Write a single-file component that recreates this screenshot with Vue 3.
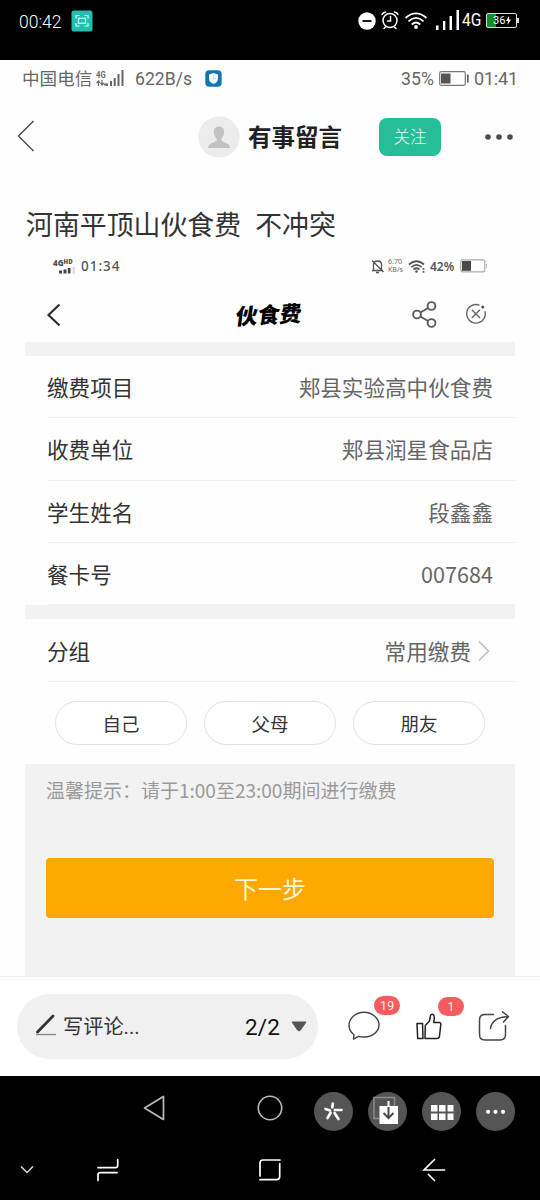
<script setup>
const rows = [
  { label: '缴费项目', value: '郏县实验高中伙食费' },
  { label: '收费单位', value: '郏县润星食品店' },
  { label: '学生姓名', value: '段鑫鑫' },
  { label: '餐卡号', value: '007684' }
]
const groups = ['自己', '父母', '朋友']
</script>

<template>
  <div class="screen">
    <div class="sys">
      <span class="sys-time">00:42</span>
      <svg class="shot" width="22" height="22" viewBox="0 0 22 22" fill="none">
        <rect x=".5" y=".5" width="21" height="21" rx="2.5" fill="#23bfae" />
        <g stroke="#d5fffa" stroke-width="1.2"><path d="M5 8.500V5.500H8.500M13.500 5.500H17V8.500M17 13V16H13.500M8.500 16H5V13" /><rect x="7.500" y="8.300" width="7" height="5" /></g>
      </svg>
      <svg class="dnd" width="18" height="18" viewBox="0 0 18 18"><circle cx="9" cy="9" r="8.700" fill="#fff" /><path d="M4.500 9H13.500" stroke="#000" stroke-width="1.800" /></svg>
      <svg class="alarm" width="18" height="20" viewBox="0 0 18 20" fill="none" stroke="#fff" stroke-width="1.500" stroke-linecap="round"><circle cx="9" cy="10.500" r="7" /><path d="M9.500 6.500V11H6.500M1 4.500Q2 2.500 4.500 2M13.500 2Q16 2.500 17 4.500M4.500 17L3 18.500M13.500 17L15 18.500" /></svg>
      <svg class="wifi" width="24" height="18" viewBox="0 0 24 18" fill="none" stroke="#fff" stroke-width="1.800"><path d="M1.500 6Q12-3.200 22.500 6M4.500 9.300Q12 2.500 19.500 9.300M7.800 12.500Q12 8.500 16.200 12.500" /><circle cx="12" cy="15" r="1.900" fill="#fff" stroke="none" /></svg>
      <svg class="bars" width="24" height="21" viewBox="0 0 24 21" fill="#fff"><path d="M0 15.500h2.500V20H0zM7 11h2.300v9H7zM13.500 6h2.500v14h-2.500zM20.500 0H23v20h-2.500z" /></svg>
      <span class="net">4G</span>
      <div class="bat"><div class="bat-box"><span>36</span><svg width="5" height="9" viewBox="0 0 5 9"><path d="M3 0L0 5H2L1.500 9L5 3.500H3Z" fill="#fff" /></svg></div><i></i></div>
    </div>

    <div class="carrier">
      <span class="op">中国电信</span>
      <div class="fourg"><b>4G</b><svg width="10" height="6" viewBox="0 0 10 6" stroke="#666" fill="none" stroke-width="1.200"><path d="M2.500 6V1M.5 3L2.500 1L4 3M6 0V5M4.500 3L6 5L8 3" /><path d="M8 4.500h2" stroke-width="2" /></svg></div>
      <svg class="cbars" width="18" height="17" viewBox="0 0 18 17" fill="#666"><path d="M0 13.500h2V16H0zM4 11h2v5H4zM7.700 8h2v8h-2zM11.500 4h2v12h-2zM15.500 0h2v16h-2z" /></svg>
      <span class="speed">622B/s</span>
      <svg class="shield" width="17" height="17" viewBox="0 0 17 17"><rect x=".3" y=".3" width="16.400" height="16.400" rx="4" fill="#1474ad" /><path d="M8.500 3L13 4.500V8.500Q13 12 8.500 14Q4 12 4 8.500V4.500Z" fill="#f4fbff" /><path d="M8.500 5.500V8.500H11" fill="none" stroke="#bcd9eb" stroke-width="1" /></svg>
      <span class="pct">35%</span>
      <svg class="cbat" width="31" height="15" viewBox="0 0 31 15" fill="none"><rect x=".7" y=".7" width="25.600" height="13.600" rx="1.500" stroke="#777" stroke-width="1.200" /><path d="M2 2.500h9.500v10H2z" fill="#555" /><path d="M28.800 3.500v8" stroke="#666" stroke-width="1.800" /></svg>
      <span class="ctime">01:41</span>
    </div>

    <div class="head">
      <svg class="back" width="18" height="32" viewBox="0 0 18 32" fill="none" stroke="#555" stroke-width="1.600"><path d="M16.500 1L1.500 16L16.500 31" /></svg>
      <svg class="avatar" width="42" height="42" viewBox="0 0 42 42"><circle cx="21" cy="21" r="20.700" fill="#ececec" /><path d="M21 10.500C17.500 10.500 15.500 13 15.800 16.500C16 19 17 21 18.500 22.500V25L12 28Q10 29.500 10 32H32Q32 29.500 30 28L23.500 25V22.500C25 21 26 19 26.200 16.500C26.500 13 24.500 10.500 21 10.500Z" fill="#c2c2c2" /></svg>
      <span class="name">有事留言</span>
      <button class="follow">关注</button>
      <svg class="dots" width="30" height="8" viewBox="0 0 30 8" fill="#4c4c4c"><circle cx="4" cy="4" r="2.800" /><circle cx="15" cy="4" r="2.800" /><circle cx="26" cy="4" r="2.800" /></svg>
    </div>

    <div class="title"><span>河南平顶山伙食费</span><span>不冲突</span></div>

    <div class="shotbox">
      <div class="istat">
        <div class="hd"><b>4G<sup>HD</sup></b><svg width="17" height="7" viewBox="0 0 17 7" fill="#444"><path d="M0 3.500h3V6.500H0zM4.500 2.500h3v4h-3zM8.800 1h2.700v5.500H8.800z" /><path d="M13.500 0h2.500v6.500h-2.500z" fill="#ddd" /></svg></div>
        <span class="itime">01:34</span>
        <svg class="bell" width="14" height="15" viewBox="0 0 14 15" fill="none" stroke="#555" stroke-width="1.300"><path d="M1 11.500H12M2.500 11V5.500Q2.500 2 6.500 2Q10.500 2 10.500 5.500V11M5 13.500H8M1 1.500L12.500 13" /></svg>
        <div class="kb"><span>6.70</span><span>KB/s</span></div>
        <svg class="iwifi" width="18" height="13" viewBox="0 0 18 13" fill="none" stroke="#555" stroke-width="1.700"><path d="M1 4.500Q8.500-2 16 4.500M3.300 7.200Q8.500 2.500 13.700 7.200M5.500 9.500Q8.500 7 11.500 9.500" /><circle cx="8.500" cy="11.500" r="1.300" fill="#555" stroke="none" /><path d="M15.500 8v1.800M15.500 11v1.800" /></svg>
        <span class="ipct">42%</span>
        <svg class="ibat" width="28" height="14" viewBox="0 0 28 14" fill="none"><rect x=".8" y=".8" width="24" height="12" rx="2" stroke="#aaa" stroke-width="1.200" /><path d="M2 2h9v9.800H2z" fill="#4a4a4a" /><path d="M26.500 5v4" stroke="#bbb" /></svg>
      </div>
      <div class="ihead">
        <svg class="iback" width="16" height="24" viewBox="0 0 16 24" fill="none" stroke="#2d2d2d" stroke-width="2.200"><path d="M13.500 1.500L2.500 12L13.500 22.500" /></svg>
        <span class="brush">伙食费</span>
        <svg class="share" width="25" height="27" viewBox="0 0 25 27" fill="none" stroke="#5c5c5c" stroke-width="1.900"><circle cx="5" cy="13.500" r="3.900" /><circle cx="19.500" cy="5" r="3.900" /><circle cx="19.500" cy="22" r="3.900" /><path d="M8.400 11.500L16 7M8.400 15.500L16 20" /></svg>
        <svg class="close" width="22" height="22" viewBox="0 0 22 22" fill="none" stroke="#666" stroke-width="1.400"><path d="M14.500 2.200A9.300 9.300 0 1 0 19.900 8.200M6.800 6.800L15 15M15 6.800L6.800 15" /><circle cx="17.800" cy="4" r="1.600" fill="#555" stroke="none" /></svg>
      </div>
      <div class="band"></div>
      <div class="rows">
        <div v-for="r in rows" :key="r.label" class="row"><span>{{ r.label }}</span><span class="val">{{ r.value }}</span></div>
      </div>
      <div class="band"></div>
      <div class="rows">
        <div class="row group"><span>分组</span><span class="val">常用缴费</span><svg width="12" height="22" viewBox="0 0 12 22" fill="none" stroke="#bbb" stroke-width="1.500"><path d="M1 1.500L10.500 11L1 20.500" /></svg></div>
      </div>
      <div class="chips"><button v-for="g in groups" :key="g">{{ g }}</button></div>
      <div class="foot">
        <p>温馨提示：请于1:00至23:00期间进行缴费</p>
        <button class="next">下一步</button>
      </div>
    </div>

    <div class="bar">
      <div class="write">
        <svg class="pen" width="22" height="22" viewBox="0 0 22 22" fill="none"><path d="M2.500 18L18 2" stroke="#333" stroke-width="2.800" stroke-linecap="round" /><path d="M1 20.500H21" stroke="#888" stroke-width="1.300" /></svg>
        <span class="wtext">写评论...</span>
        <span class="page">2/2</span>
        <svg class="tri" width="16" height="11" viewBox="0 0 16 11"><path d="M1 1H15L9.500 9Q8 11 6.500 9Z" fill="#555" stroke="#555" stroke-linejoin="round" /></svg>
      </div>
      <div class="act comment">
        <svg width="32" height="30" viewBox="0 0 32 30" fill="none" stroke="#444" stroke-width="1.400" stroke-linejoin="round"><path d="M6 23.800C3 21.500 1 18.500 1 14.500C1 7 8 1.200 16 1.200S31 7 31 14S24 26 16 26Q12.500 26 10.500 25.300L5.500 28.200Z" /></svg>
        <em>19</em>
      </div>
      <div class="act like">
        <svg width="26" height="27" viewBox="0 0 26 27" fill="none" stroke="#222" stroke-width="1.500" stroke-linejoin="round"><path d="M1 10.500H6.500L7 25.500H1.700ZM9.300 12.500L13.500 8L14.500 2.500Q15 1 16.500 1.300Q18.500 2 18.300 5L17.800 9.500H23Q25 9.500 24.800 11.500L23.500 23Q23.200 25.500 21 25.500H9Z" /></svg>
        <em>1</em>
      </div>
      <svg class="out" width="32" height="32" viewBox="0 0 32 32" fill="none" stroke="#444" stroke-width="1.500" stroke-linecap="round" stroke-linejoin="round"><path d="M15.500 4.500H7Q1.500 4.500 1.500 10V24.500Q1.500 30 7 30H22Q27.500 30 27.500 24.500V15.500M12.500 18.500Q14 7.500 30 6.500M24.500 1.800L30.500 6.500L25.500 12" /></svg>
    </div>

    <div class="nav">
      <div class="nav1">
        <svg class="tback" width="22" height="26" viewBox="0 0 22 26" fill="none" stroke="#bbb" stroke-width="1.700" stroke-linejoin="round"><path d="M20.500 1.500V24.500L1.500 13Z" /></svg>
        <svg class="home" width="26" height="26" viewBox="0 0 26 26" fill="none" stroke="#bbb" stroke-width="1.600"><circle cx="13" cy="13" r="11.700" /></svg>
        <div class="tools">
          <svg viewBox="0 0 39 39"><circle cx="19.500" cy="19.500" r="19.500" fill="#555" /><g stroke="#fff" stroke-width="2.700" stroke-linecap="round"><path d="M18.800 11.500L18.300 15.500M11.500 17L16 18.500M21 18H27.500M16.500 21L13.500 26M20.500 21L24.500 27" /></g></svg>
          <svg viewBox="0 0 39 39"><circle cx="19.500" cy="19.500" r="19.500" fill="#555" /><rect x="6" y="5.500" width="20.500" height="21" fill="none" stroke="#8c8c8c" stroke-width="1.500" /><path d="M11.500 14H30V32H11.500Z" fill="#fff" /><path d="M20.500 9V15" stroke="#fff" stroke-width="2" /><path d="M20.500 15V26M15.500 21L20.500 26L25.500 21" fill="none" stroke="#4b4b4b" stroke-width="2" /></svg>
          <svg viewBox="0 0 39 39"><circle cx="19.500" cy="19.500" r="19.500" fill="#555" /><path d="M9 13h6.500v6.500H9zM17 13h6.500v6.500H17zM25.500 13h6v6.500h-6zM9 21.500h6.500v6.500H9zM17 21.500h6.500v6.500H17zM25.500 21.500h6v6.500h-6z" fill="#fff" /></svg>
          <svg viewBox="0 0 39 39"><circle cx="19.500" cy="19.500" r="19.500" fill="#555" /><g fill="#fff"><circle cx="12" cy="19.800" r="2.100" /><circle cx="19.500" cy="19.800" r="2.100" /><circle cx="27" cy="19.800" r="2.100" /></g></svg>
        </div>
      </div>
      <div class="nav2">
        <svg class="down" width="14" height="9" viewBox="0 0 14 9" fill="none" stroke="#ddd" stroke-width="1.500"><path d="M1 1.500L7 7.500L13 1.500" /></svg>
        <svg class="recent" width="24" height="24" viewBox="0 0 24 24" fill="none" stroke="#fff" stroke-width="1.700" stroke-linecap="round"><path d="M2 9.700H19.500Q21.700 9.700 21.700 7.500V1.500M21 14.700H4.200Q2 14.700 2 17V22.500" /></svg>
        <svg class="square" width="24" height="24" viewBox="0 0 24 24" fill="none" stroke="#fff" stroke-width="1.700" stroke-linecap="round"><path d="M2 18V5Q2 2 5 2H22M2 21.700H18.500Q21.700 21.700 21.700 18.500V5.500" /></svg>
        <svg class="arrow" width="24" height="24" viewBox="0 0 24 24" fill="none" stroke="#fff" stroke-width="1.700" stroke-linecap="round"><path d="M12.500 1.500L2 12H22.500M6.500 16.500L12.500 22.500" /></svg>
      </div>
    </div>
  </div>
</template>

<style>
body { margin: 0; background: #fff; }
</style>
<style scoped>
* { box-sizing: border-box; }
.screen { width: 540px; height: 1200px; overflow: hidden; background: #fefefe; font-family: Roboto, "Noto Sans CJK SC", sans-serif; color: #333; white-space: nowrap; }
svg { display: block; flex: none; }
span { flex: none; }
button { border: 0; padding: 0; background: none; font-family: inherit; color: inherit; }
.sys, .carrier, .head, .istat, .ihead, .nav1, .nav2 { display: flex; align-items: center; }
.sys { height: 60px; padding-bottom: 18px; background: #000; color: #fff; }
.sys-time { margin-left: 19px; width: 44px; font-size: 17.5px; font-weight: 300; margin-top: 2px; }
.shot { margin-left: 8px; margin-top: -1px; }
.dnd { margin-left: 265px; margin-top: -1px; }
.alarm { margin-left: 5px; margin-top: -2px; }
.wifi { margin-left: 5px; }
.bars { margin-left: 8px; margin-top: -1px; }
.net { width: 24px; margin-left: 2px; margin-top: -2px; font-size: 18.500px; transform: scaleX(.84); transform-origin: left; }
.bat { display: flex; align-items: center; margin-top: -1px; }
.bat-box { width: 31px; height: 15px; border: 1px solid #ddd; border-radius: 2px; display: flex; align-items: center; padding-left: 6px; gap: 1px; font-size: 11px; background: linear-gradient(90deg, #128c2c 9px, #000 9px); }
.bat i { width: 2px; height: 5px; background: #ddd; }
.carrier { height: 37px; color: #666; }
.op { margin-left: 22px; width: 72px; font-size: 17.6px; line-height: 24px; padding-top: 1px; }
.fourg { width: 11px; margin-left: 2px; margin-top: -1px; font-size: 9px; line-height: 9px; }
.fourg b { display: block; transform: scaleX(.85); transform-origin: left; }
.cbars { margin-left: -1px; }
.speed { margin-left: 11px; width: 70px; font-size: 17.6px; }
.shield { margin-left: 0; }
.pct { margin-left: 179px; width: 36px; font-size: 17.700px; }
.cbat { margin-left: 2px; }
.ctime { margin-left: 4px; font-size: 18px; letter-spacing: -.2px; }
.head { height: 80px; }
.back { margin-left: 17px; margin-top: -2px; }
.avatar { margin-left: 163px; margin-top: -1px; }
.name { margin-left: 8px; width: 98px; padding-top: 2px; font-size: 23.5px; line-height: 30px; font-weight: 700; color: #222; }
.follow { margin-left: 33px; margin-top: -1px; width: 62px; height: 38px; border-radius: 8px; background: #26bd99; color: #e9fff8; font-size: 16.500px; line-height: 36px; padding-top: 2px; font-weight: 300; }
.dots { margin-left: 43px; margin-top: -1px; }
.title { height: 68px; padding: 31px 0 0 26px; display: flex; gap: 14px; font-size: 26.900px; line-height: 37px; }
.shotbox { height: 731px; margin: 0 25px; font-family: "Noto Sans CJK SC", sans-serif; }
.istat { height: 42px; }
.hd { width: 24px; margin-left: 28px; font: 700 8px/8px "Open Sans", sans-serif; color: #555; }
.hd b { display: block; }
.hd sup { font-size: 6px; line-height: 0; vertical-align: 2px; }
.hd svg { margin-left: 6px; }
.itime { margin-left: 4px; width: 44px; font: 500 13.500px "Noto Sans", sans-serif; letter-spacing: 1px; color: #555; }
.bell { margin-left: 246px; }
.kb { width: 16px; margin-left: 3px; font: 7px/8.500px "Noto Sans", sans-serif; color: #666; display: flex; flex-direction: column; }
.iwifi { margin-left: 4px; }
.ipct { margin-left: 4px; width: 26px; font: 600 12px "Noto Sans", sans-serif; color: #555; }
.ibat { margin-left: 4px; }
.ihead { height: 55px; }
.iback { margin-left: 21px; }
.brush { margin-left: 174px; width: 68px; font-size: 22px; line-height: 30px; font-weight: 900; color: #000; transform: skew(-7deg, -3deg); margin-top: -3px; }
.share { margin-left: 108px; margin-top: -1px; }
.close { margin-left: 28px; margin-top: -1px; }
.band { height: 14px; background: #f2f2f2; }
.rows { padding-left: 23px; }
.row { height: 62.500px; border-bottom: 1px solid #eee; padding: 1px 22px 0 0; display: flex; align-items: center; justify-content: space-between; font-size: 21.600px; line-height: 30px; }
.row > span:first-child { margin-left: -1px; }
.row:first-child { height: 62px; }
.row:last-child { border-bottom-color: #f2f2f2; height: 62px; }
.row .val { color: #666; }
.group .val { margin-left: auto; margin-right: 7px; }
.row.group { padding-right: 25px; height: 63px; border-color: #eee; }
.chips { height: 82px; padding: 19px 30px 0; display: flex; justify-content: space-between; }
.chips button { width: 132px; height: 44px; border: 1.500px solid #e2e2e2; border-radius: 22px; font-size: 18.500px; line-height: 40px; background: #fff; }
.foot { height: 213px; background: #f2f2f2; padding: 11px 21px 0; }
.foot p { margin: 0; height: 83px; font-size: 19px; line-height: 30px; color: #999; }
.next { display: block; width: 448px; height: 60px; border-radius: 4px; background: #ffa800; color: #fff8dd; font-size: 24px; line-height: 60px; }
.bar { height: 100px; border-top: 1px solid #ededed; display: flex; align-items: center; background: #fff; position: relative; }
.write { width: 301px; height: 65px; margin-left: 17px; border-radius: 33px; background: #f0f0f0; display: flex; align-items: center; }
.pen { margin-left: 18px; margin-top: -4px; }
.wtext { margin-left: 6px; width: 90px; font-size: 20.200px; line-height: 30px; color: #333; }
.page { margin-left: 92px; width: 38px; font-size: 22.500px; color: #111; letter-spacing: .2px; }
.tri { margin-left: 8px; margin-top: -1px; }
.act { position: relative; }
.act em { position: absolute; height: 19px; width: 26px; border-radius: 10px; background: #f45c60; color: #ffe9e9; font: 13px/20px Roboto, sans-serif; text-align: center; }
.comment { margin-left: 30px; margin-top: -1px; }
.comment em { left: 26px; top: -15px; }
.like { margin-left: 36px; margin-top: -1px; }
.like em { left: 22px; top: -16px; }
.out { margin-left: 36px; margin-top: -2px; }
.nav { height: 124px; background: #000; }
.nav1 { height: 71px; }
.tback { margin-left: 143px; margin-top: -7px; }
.home { margin-left: 92px; margin-top: -7px; }
.tools { display: flex; gap: 15px; margin-left: 31px; }
.tools svg { width: 39px; height: 39px; }
.nav2 { height: 46px; }
.down { margin-left: 20px; margin-top: -1px; }
.recent { margin-left: 62px; }
.square { margin-left: 138px; }
.arrow { margin-left: 140px; }
</style>
